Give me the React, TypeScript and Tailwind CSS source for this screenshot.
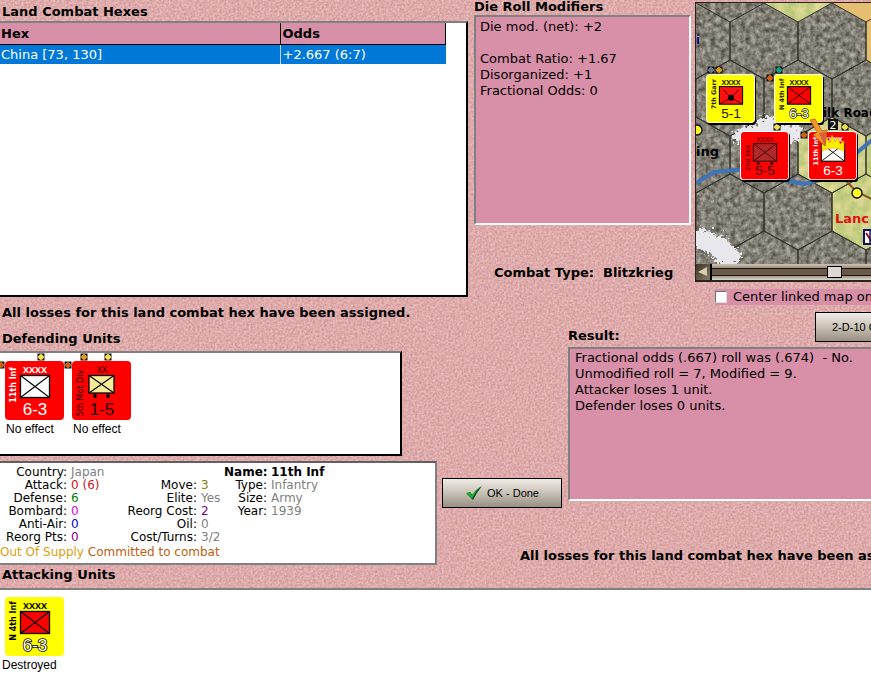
import { ReactNode } from 'react';

type Badge = { x: number; y: number; color: string };

type Counter = {
  name: string;
  size: string;
  strength: string;
  color: string;
  ink: string;
  box: string;
  symbolInk?: string;
  small?: boolean;
  wheels?: boolean;
  garrison?: boolean;
  outlined?: boolean;
  badges?: Badge[];
};

const defenders: Counter[] = [
  {
    name: '11th Inf',
    size: 'XXXX',
    strength: '6-3',
    color: '#ff0000',
    ink: '#ffffff',
    box: '#ffffff',
    badges: [
      { x: 36, y: -4, color: '#f0e050' },
      { x: -4, y: 4, color: '#c86414' }
    ]
  },
  {
    name: '5th Mot Div',
    size: 'XX',
    strength: '1-5',
    color: '#ff0000',
    ink: '#200000',
    box: '#f5ec9a',
    small: true,
    wheels: true,
    badges: [
      { x: 12, y: -4, color: '#e09a1e' },
      { x: 36, y: -4, color: '#f0e050' },
      { x: -4, y: 4, color: '#c86414' }
    ]
  }
];

const attackers: Counter[] = [
  {
    name: 'N 4th Inf',
    size: 'XXXX',
    strength: '6-3',
    color: '#ffff00',
    ink: '#000000',
    box: '#ff0000',
    outlined: true
  }
];

const leftStats = [
  ['Country:', 'Japan', 'text-[#808080]'],
  ['Attack:', '0 (6)', 'text-[#d01818]'],
  ['Defense:', '6', 'text-[#008000]'],
  ['Bombard:', '0', 'text-[#e000e0]'],
  ['Anti-Air:', '0', 'text-[#0000d0]'],
  ['Reorg Pts:', '0', 'text-[#800080]']
];

const middleStats = [
  ['Move:', '3', 'text-[#808000]'],
  ['Elite:', 'Yes', 'text-[#808080]'],
  ['Reorg Cost:', '2', 'text-[#800080]'],
  ['Oil:', '0', 'text-[#808080]'],
  ['Cost/Turns:', '3/2', 'text-[#808080]']
];

const rightStats = [
  ['Name:', '11th Inf', 'font-bold text-black'],
  ['Type:', 'Infantry', 'text-[#808080]'],
  ['Size:', 'Army', 'text-[#808080]'],
  ['Year:', '1939', 'text-[#808080]']
];

function BadgeDot({ x, y, color }: Badge) {
  return (
    <g>
      <rect x={x - 3.5} y={y - 3.5} width="7" height="7" fill="#111" />
      <path d={`M${x} ${y - 3.3}l3.3 3.3l-3.3 3.3l-3.3 -3.3z`} fill={color} />
      <circle cx={x} cy={y} r="2.6" fill={color} />
    </g>
  );
}

function CounterArt({ unit }: { unit: Counter }) {
  const { name, size, strength, color, ink, box, small, wheels, garrison, outlined, badges = [] } = unit;
  const symbolInk = unit.symbolInk ?? '#000000';
  const left = small ? 17 : 15.5;
  const right = small ? 42 : 44.5;
  const top = 14.5;
  const bottom = small ? 32 : 36.5;

  return (
    <g>
      {badges.map((badge) => (
        <BadgeDot key={`${badge.x}-${badge.y}`} {...badge} />
      ))}
      <rect width="59" height="59" rx="4" fill={color} />
      <text x="30" y="12" textAnchor="middle" fontSize="9" fontWeight={wheels ? 400 : 700} fill={ink} fontFamily="'Open Sans', sans-serif">
        {size}
      </text>
      <rect x={left} y={top} width={right - left} height={bottom - top} fill={box} stroke={symbolInk} strokeWidth="1.3" />
      {garrison ? (
        <g stroke={symbolInk}>
          <circle cx="30" cy="28.5" r="3.4" fill={symbolInk} />
          <path
            d={`M${left} ${bottom}L30 28.5L${right} ${bottom}M${left + 5} ${top + 4}L30 28.5L${right - 5} ${top + 4}`}
            strokeWidth="0.9"
            fill="none"
          />
        </g>
      ) : (
        <path d={`M${left} ${top}L${right} ${bottom}M${right} ${top}L${left} ${bottom}`} stroke={symbolInk} strokeWidth="1.1" />
      )}
      {wheels && (
        <g fill={symbolInk}>
          <circle cx={left + 6} cy={bottom + 3} r="1.9" />
          <circle cx={right - 6} cy={bottom + 3} r="1.9" />
        </g>
      )}
      <text
        x="30"
        y="54"
        textAnchor="middle"
        fontSize="17"
        fill={outlined ? '#ffffff' : ink}
        stroke={outlined ? '#000000' : 'none'}
        strokeWidth={outlined ? 1.6 : 0}
        paintOrder="stroke"
        fontFamily="'Liberation Sans', sans-serif"
      >
        {strength}
      </text>
      <text
        transform={`translate(11 ${wheels ? 32 : 24}) rotate(-90)`}
        textAnchor="middle"
        fontSize="8"
        fontWeight={wheels ? 400 : 700}
        fill={ink}
        fontFamily="'DejaVu Sans', sans-serif"
      >
        {name}
      </text>
    </g>
  );
}

function UnitFigure({ unit, caption, captionClass }: { unit: Counter; caption: string; captionClass: string }) {
  return (
    <figure className="w-[60px]">
      <svg width="59" height="59" className="ml-1 block overflow-visible">
        <CounterArt unit={unit} />
      </svg>
      <figcaption
        className={`font-['Liberation_Sans',sans-serif] text-[12px] leading-[18px] whitespace-nowrap ${captionClass}`}
      >
        {caption}
      </figcaption>
    </figure>
  );
}

function MapCounter({ x, y, unit }: { x: number; y: number; unit: Counter }) {
  return (
    <g transform={`translate(${x} ${y})`}>
      <rect x="2" y="2" width="48" height="49" rx="3" fill="#000" />
      <rect width="49" height="49" rx="4" fill="#fff" />
      <g transform="translate(1 1) scale(0.8)">
        <CounterArt unit={unit} />
      </g>
    </g>
  );
}

const garrison: Counter = { name: '7th Garr', size: 'XXXX', strength: '5-1', color: '#ffff00', ink: '#222200', box: '#ff1010', garrison: true };
const inf4: Counter = { ...attackers[0], ink: '#222200' };
const mot: Counter = { name: '2nd Mot', size: 'XXXX', strength: '5-5', color: '#ff0000', ink: '#400000', box: '#b02828', symbolInk: '#300000', wheels: true };
const inf11: Counter = { ...defenders[0], badges: [] };

// outline of a pointy-top hex, 68 wide and 76 tall
const hex = (cx: number, cy: number) => `M${cx} ${cy - 38}l34 19v38l-34 19l-34 -19v-38z`;

const hexCenters = [
  [0, 38], [68, 38], [136, 38], [204, 38],
  [34, 95], [102, 95], [170, 95],
  [0, 152], [68, 152], [136, 152], [204, 152],
  [34, 209], [102, 209], [170, 209],
  [0, 266], [68, 266], [136, 266], [204, 266]
];

function HexMap() {
  return (
    <svg width="100%" height="261" className="block" role="img" aria-label="Linked map">
      <defs>
        <filter id="rock" x="0" y="0" width="100%" height="100%" colorInterpolationFilters="sRGB">
          <feTurbulence type="fractalNoise" baseFrequency="0.2" numOctaves="4" seed="4" />
          <feColorMatrix values="0.6 0 0 0 0.21  0.6 0 0 0 0.2  0.6 0 0 0 0.16  0 0 0 0 1" />
        </filter>
        <filter id="grass" x="0" y="0" width="100%" height="100%" colorInterpolationFilters="sRGB">
          <feTurbulence type="fractalNoise" baseFrequency="0.1" numOctaves="3" seed="9" result="n" />
          <feColorMatrix in="n" values="0.35 0 0 0 0.62  0.15 0 0 0 0.74  0.25 0 0 0 0.4  0 0 0 0 1" />
          <feComposite in2="SourceGraphic" operator="in" />
        </filter>
        <filter id="snow" x="-20%" y="-20%" width="140%" height="140%">
          <feTurbulence type="fractalNoise" baseFrequency="0.3" numOctaves="3" result="n" />
          <feDisplacementMap in="SourceGraphic" in2="n" scale="16" xChannelSelector="R" yChannelSelector="G" />
        </filter>
      </defs>
      <rect width="100%" height="100%" filter="url(#rock)" />
      <g filter="url(#grass)">
        <path d="M68 0l34 19l34 -19z" />
        <path d={hex(136, 152)} />
        <path d={hex(204, 152)} />
        <path d={hex(170, 209)} />
      </g>
      <path d="M136 0l34 19v40h8v-59z" fill="#e6be72" />
      <g fill="none" stroke="#34322c" strokeWidth="1">
        {hexCenters.map(([cx, cy]) => (
          <path key={`${cx}-${cy}`} d={hex(cx, cy)} />
        ))}
      </g>
      <g fill="#e8e8ec" filter="url(#snow)">
        <path d="M36 132l8-7l14-3l8-8l10 0l6 7l22 2l6 10l-10 6l-60 0z" />
        <path d="M-4 226l14 0l8 6l12 2l8 12l8 4l-3 8l-8 8h-8l-12-14l-19-10z" />
      </g>
      <path d="M0 180L18 169L40 167H62M88 177L108 181L136 174M158 152L176 137" fill="none" stroke="#3f74b8" strokeWidth="4" />
      <path d="M148 176L161 189L178 197" fill="none" stroke="#85501c" strokeWidth="2" />
      <circle cx="161" cy="190" r="5" fill="#ffff20" stroke="#000" strokeWidth="1.3" />
      <circle cx="1" cy="127" r="5" fill="#ffff20" stroke="#000" strokeWidth="1.3" />
      <g fontFamily="'DejaVu Sans', sans-serif" fontWeight="700" fontSize="13">
        <text x="0" y="41" fill="#10106a" fontSize="12">i</text>
        <text x="127" y="114" fontSize="12">ilk Road</text>
        <text x="0" y="153">ing</text>
        <text x="139" y="220" fill="#e01010">Lanc</text>
      </g>
      <rect x="168" y="227" width="12" height="14" fill="#fff" stroke="#10106a" strokeWidth="2" />
      <path d="M170 230L176 239" stroke="#a01010" strokeWidth="2" />
      <path d="M174 228V240" stroke="#10106a" strokeWidth="1.5" />
      <BadgeDot x={15} y={67} color="#70748c" />
      <BadgeDot x={23} y={67} color="#d8a020" />
      <BadgeDot x={83} y={67} color="#10a080" />
      <BadgeDot x={74} y={75} color="#d06018" />
      <BadgeDot x={81} y={124} color="#f0e050" />
      <BadgeDot x={108} y={132} color="#c86414" />
      <BadgeDot x={149} y={124} color="#f0e050" />
      <MapCounter x={10} y={71} unit={garrison} />
      <MapCounter x={78} y={71} unit={inf4} />
      <MapCounter x={44} y={128} unit={mot} />
      <MapCounter x={112} y={128} unit={inf11} />
      <rect x="132" y="116" width="10" height="11" fill="#111" />
      <text x="137" y="126" textAnchor="middle" fontSize="11" fill="#fff" fontFamily="'DejaVu Sans', sans-serif">2</text>
      <path d="M126 148V139L129 143L130 134L134 140L136 132L139 139L142 134L144 141L148 138V148Q137 142 126 148Z" fill="#ffee00" stroke="#ff9a00" strokeWidth="0.6" />
      <path d="M114 117L121 129L117 132L129 143L131 127L126 128L119 116Z" fill="#f0962a" stroke="#b85c14" strokeWidth="0.8" />
      <path d="M123 130L129 143L130 129Z" fill="#d8603c" />
    </svg>
  );
}

function StatList({ rows, className }: { rows: string[][]; className: string }) {
  return (
    <dl className={`grid content-start gap-x-1 whitespace-nowrap ${className}`}>
      {rows.map(([label, value, color]) => (
        <div key={label} className="col-span-2 grid grid-cols-subgrid">
          <dt className={label === 'Name:' ? 'text-right font-bold' : 'text-right'}>{label}</dt>
          <dd className={color}>{value}</dd>
        </div>
      ))}
    </dl>
  );
}

function PlateButton({ className, children }: { className: string; children: ReactNode }) {
  return (
    <button
      type="button"
      className={`flex h-[30px] w-[120px] shrink-0 items-center gap-1 border border-black bg-linear-to-b from-[#f0ece6] via-[#c8c1b7] to-[#989080] font-['Liberation_Sans',sans-serif] text-[11px] whitespace-nowrap ${className}`}
    >
      {children}
    </button>
  );
}

function PaperTexture() {
  return (
    <svg className="absolute inset-0 -z-10 size-full" aria-hidden="true">
      <filter id="paper" x="0" y="0" width="100%" height="100%" colorInterpolationFilters="sRGB">
        <feTurbulence type="fractalNoise" baseFrequency="0.45" numOctaves="2" seed="2" />
        <feColorMatrix values="0.16 0 0 0 0.79  0.28 0 0 0 0.53  0.26 0 0 0 0.54  0 0 0 0 1" />
      </filter>
      <rect width="100%" height="100%" filter="url(#paper)" />
    </svg>
  );
}

export default function App() {
  return (
    <div className="relative isolate flex min-h-screen flex-col overflow-hidden bg-[#dca6a6] font-['DejaVu_Sans',sans-serif] text-[13px] leading-4 text-black">
      <PaperTexture />

      <div className="flex">
        <section className="flex w-[468px] shrink-0 flex-col pt-1">
          <h2 className="pb-px pl-0.5 font-bold">Land Combat Hexes</h2>
          <div className="h-[276px] border-t-2 border-r-2 border-b-2 border-t-[#808080] border-r-black border-b-black bg-white">
            <table className="w-[446px] table-fixed border-collapse text-left">
              <thead className="bg-[#d88fa8]">
                <tr className="h-[21px] border-b border-black">
                  <th className="w-[280px] border-r border-black pt-px pl-px">Hex</th>
                  <th className="border-r border-black pt-px pl-0.5">Odds</th>
                </tr>
              </thead>
              <tbody>
                <tr className="h-5 bg-[#0078d7] text-white">
                  <td className="border-r border-[#d0d0d0] pt-px pl-px">China [73, 130]</td>
                  <td className="pt-px pl-0.5">+2.667 (6:7)</td>
                </tr>
              </tbody>
            </table>
          </div>
        </section>

        <section className="ml-1.5 flex w-[217px] shrink-0 flex-col">
          <h2 className="pb-px leading-[14px] font-bold">Die Roll Modifiers</h2>
          <div className="h-[210px] border-2 border-t-[#808080] border-r-white border-b-white border-l-[#808080] bg-[#d88fa8] pt-0.5 pl-1">
            <p>Die mod. (net): +2</p>
            <p className="pt-4">Combat Ratio: +1.67</p>
            <p>Disorganized: +1</p>
            <p>Fractional Odds: 0</p>
          </div>
          <p className="pt-10 pl-5 font-bold whitespace-pre">Combat Type:  Blitzkrieg</p>
        </section>

        <section className="ml-1 flex min-w-0 flex-1 flex-col pt-0.5">
          <div className="border-t border-b-2 border-l border-[#2a241c]">
            <HexMap />
            <div className="flex h-4">
              <button
                type="button"
                aria-label="Scroll left"
                className="flex w-4 shrink-0 items-center justify-center border-r-2 border-black bg-linear-to-br from-[#3c3426] to-[#8a8068]"
              >
                <svg width="10" height="10">
                  <path d="M9 0V9L0 5Z" fill="#d8ccb0" />
                </svg>
              </button>
              <input
                type="range"
                aria-label="Map position"
                defaultValue={80}
                className="h-4 min-w-0 flex-1 appearance-none bg-linear-to-b from-[#cfc6b8] via-[#6a5848] to-[#d8d8cc] [&::-webkit-slider-runnable-track]:h-2 [&::-webkit-slider-runnable-track]:border-y [&::-webkit-slider-runnable-track]:border-[#201810] [&::-webkit-slider-runnable-track]:bg-[#6a5848] [&::-webkit-slider-thumb]:-mt-[3px] [&::-webkit-slider-thumb]:h-3 [&::-webkit-slider-thumb]:w-[15px] [&::-webkit-slider-thumb]:appearance-none [&::-webkit-slider-thumb]:border [&::-webkit-slider-thumb]:border-black [&::-webkit-slider-thumb]:bg-[#ddd8d4]"
              />
            </div>
          </div>
          <label className="mt-[7px] ml-5 flex items-center gap-1.5 overflow-hidden bg-[#d88fa8] whitespace-nowrap">
            <input
              type="checkbox"
              className="size-3 shrink-0 appearance-none border border-t-[#707070] border-r-[#e0e0e0] border-b-[#e0e0e0] border-l-[#707070] bg-white checked:bg-[#0078d7]"
            />
            Center linked map on
          </label>
        </section>
      </div>

      <div className="flex">
        <section className="flex w-[437px] shrink-0 flex-col">
          <p className="pl-0.5 font-bold whitespace-nowrap">All losses for this land combat hex have been assigned.</p>
          <h2 className="pt-2.5 pb-1 pl-0.5 font-bold">Defending Units</h2>
          <div className="flex h-[105px] w-[402px] gap-[7px] border-t-2 border-r-2 border-b-2 border-t-[#808080] border-r-black border-b-black bg-white pt-2 pl-px">
            {defenders.map((unit) => (
              <UnitFigure key={unit.name} unit={unit} caption="No effect" captionClass="pl-[5px]" />
            ))}
          </div>
          <div className="mt-[5px] border-2 border-l-0 border-t-[#606060] border-r-[#808080] border-b-[#808080] bg-white pt-[3px] pb-1 text-[12px] leading-[13px]">
            <div className="flex">
              <StatList rows={leftStats} className="w-[117px] grid-cols-[67px_1fr]" />
              <StatList rows={middleStats} className="w-[107px] grid-cols-[80px_1fr] pt-[13px]" />
              <StatList rows={rightStats} className="grid-cols-[43px_1fr]" />
            </div>
            <p className="pt-0.5">
              <span className="text-[#dca010]">Out Of Supply</span> <span className="text-[#c06010]">Committed to combat</span>
            </p>
          </div>
        </section>

        <div className="flex min-w-0 flex-1 flex-col pl-[5px]">
          <div className="flex">
            <PlateButton className="mt-[173px] justify-center">
              <svg width="18" height="16" viewBox="0 0 18 16">
                <path d="M2 9L5 7L8 11Q11 5 17 1Q12 7 8 15Z" fill="#103a30" />
                <path d="M1 8L5 7L7 10Q11 4 16 1Q10 7 7 14Z" fill="#18a828" />
              </svg>
              OK - Done
            </PlateButton>
            <section className="ml-1.5 flex min-w-0 flex-1 flex-col pt-[7px]">
              <div className="flex items-start justify-between">
                <h2 className="pt-4 font-bold">Result:</h2>
                <PlateButton className="-mr-16 pl-4">2-D-10 CRT</PlateButton>
              </div>
              <div className="mt-[3px] h-[154px] border-t-2 border-b-2 border-l-2 border-t-[#808080] border-b-white border-l-[#808080] bg-[#d88fa8] pt-px pl-[5px] whitespace-pre">
                <p>Fractional odds (.667) roll was (.674)  - No.</p>
                <p>Unmodified roll = 7, Modified = 9.</p>
                <p>Attacker loses 1 unit.</p>
                <p>Defender loses 0 units.</p>
              </div>
            </section>
          </div>
          <p className="mt-10 ml-[78px] overflow-hidden font-bold whitespace-nowrap">
            All losses for this land combat hex have been assigned.
          </p>
        </div>
      </div>

      <section className="flex flex-1 flex-col">
        <h2 className="pt-0.5 pb-[5px] pl-0.5 font-bold">Attacking Units</h2>
        <div className="flex flex-1 border-t-2 border-[#808080] bg-white pt-[7px] pl-px">
          {attackers.map((unit) => (
            <UnitFigure key={unit.name} unit={unit} caption="Destroyed" captionClass="pl-px" />
          ))}
        </div>
      </section>
    </div>
  );
}
